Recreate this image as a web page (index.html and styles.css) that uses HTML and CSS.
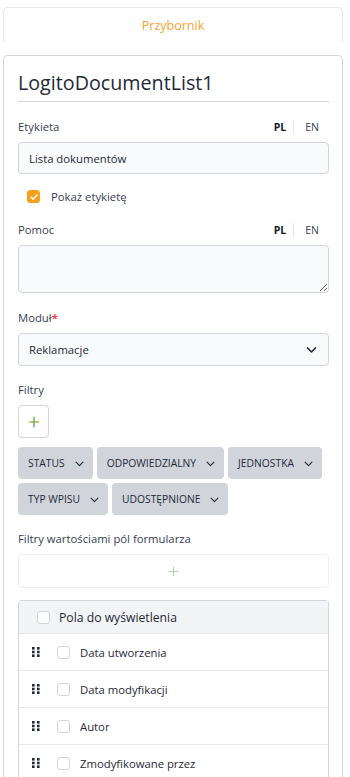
FILE: index.html
```html
<!DOCTYPE html>
<html lang="pl">
<head>
    <meta charset="UTF-8">
    <meta name="viewport" content="width=device-width, initial-scale=1.0">
    <title>Przybornik</title>
    <link rel="stylesheet" href="styles.css">
</head>
<body>

    <!-- Zakladka -->
    <div class="tab-bar">
        <span class="tab-active">Przybornik</span>
    </div>

    <!-- Panel wlasciwosci -->
    <div class="panel">
        <h2 class="panel-title">LogitoDocumentList1</h2>

        <div class="field-head">
            <label>Etykieta</label>
            <div class="lang-switch">
                <span class="lang lang-active">PL</span>
                <span class="lang">EN</span>
            </div>
        </div>
        <input class="text-input" type="text" value="Lista dokumentów">

        <label class="check-row">
            <span class="check check-on">
                <svg viewBox="0 0 12 12" width="10" height="10"><path d="M2.5 6.2 L5 8.5 L9.5 3.8" fill="none" stroke="#fff" stroke-width="1.8" stroke-linecap="round" stroke-linejoin="round"/></svg>
            </span>
            Pokaż etykietę
        </label>

        <div class="field-head">
            <label>Pomoc</label>
            <div class="lang-switch">
                <span class="lang lang-active">PL</span>
                <span class="lang">EN</span>
            </div>
        </div>
        <textarea class="text-area"></textarea>

        <div class="field-head">
            <label>Moduł<span class="required">*</span></label>
        </div>
        <div class="select">
            <span>Reklamacje</span>
            <svg viewBox="0 0 16 16" width="13" height="13"><path d="M3 6 L8 11 L13 6" fill="none" stroke="#1f2937" stroke-width="1.8" stroke-linecap="round" stroke-linejoin="round"/></svg>
        </div>

        <div class="field-head">
            <label>Filtry</label>
        </div>
        <button class="btn-add">
            <svg viewBox="0 0 14 14" width="12" height="12"><path d="M1 7 H13" stroke="#b9a83e" stroke-width="1.6"/><path d="M7 1 V13" stroke="#4fae57" stroke-width="1.6"/></svg>
        </button>

        <div class="chips">
            <span class="chip">STATUS <svg viewBox="0 0 16 16" width="11" height="11"><path d="M3 6 L8 11 L13 6" fill="none" stroke="#1f2937" stroke-width="1.6" stroke-linecap="round" stroke-linejoin="round"/></svg></span>
            <span class="chip">ODPOWIEDZIALNY <svg viewBox="0 0 16 16" width="11" height="11"><path d="M3 6 L8 11 L13 6" fill="none" stroke="#1f2937" stroke-width="1.6" stroke-linecap="round" stroke-linejoin="round"/></svg></span>
            <span class="chip">JEDNOSTKA <svg viewBox="0 0 16 16" width="11" height="11"><path d="M3 6 L8 11 L13 6" fill="none" stroke="#1f2937" stroke-width="1.6" stroke-linecap="round" stroke-linejoin="round"/></svg></span>
            <span class="chip">TYP WPISU <svg viewBox="0 0 16 16" width="11" height="11"><path d="M3 6 L8 11 L13 6" fill="none" stroke="#1f2937" stroke-width="1.6" stroke-linecap="round" stroke-linejoin="round"/></svg></span>
            <span class="chip">UDOSTĘPNIONE <svg viewBox="0 0 16 16" width="11" height="11"><path d="M3 6 L8 11 L13 6" fill="none" stroke="#1f2937" stroke-width="1.6" stroke-linecap="round" stroke-linejoin="round"/></svg></span>
        </div>

        <div class="field-head">
            <label>Filtry wartościami pól formularza</label>
        </div>
        <div class="add-box">
            <svg viewBox="0 0 14 14" width="11" height="11"><path d="M7 1 V13 M1 7 H13" stroke="#a6dba9" stroke-width="1.3"/></svg>
        </div>

        <!-- Lista pol -->
        <div class="field-list">
            <div class="list-head">
                <span class="check"></span>
                Pola do wyświetlenia
            </div>
            <div class="list-row">
                <svg class="grip" viewBox="0 0 8 10" width="8" height="10"><rect x="0" y="0" width="2.6" height="2.6"/><rect x="5" y="0" width="2.6" height="2.6"/><rect x="0" y="3.7" width="2.6" height="2.6"/><rect x="5" y="3.7" width="2.6" height="2.6"/><rect x="0" y="7.4" width="2.6" height="2.6"/><rect x="5" y="7.4" width="2.6" height="2.6"/></svg>
                <span class="check"></span>
                Data utworzenia
            </div>
            <div class="list-row">
                <svg class="grip" viewBox="0 0 8 10" width="8" height="10"><rect x="0" y="0" width="2.6" height="2.6"/><rect x="5" y="0" width="2.6" height="2.6"/><rect x="0" y="3.7" width="2.6" height="2.6"/><rect x="5" y="3.7" width="2.6" height="2.6"/><rect x="0" y="7.4" width="2.6" height="2.6"/><rect x="5" y="7.4" width="2.6" height="2.6"/></svg>
                <span class="check"></span>
                Data modyfikacji
            </div>
            <div class="list-row">
                <svg class="grip" viewBox="0 0 8 10" width="8" height="10"><rect x="0" y="0" width="2.6" height="2.6"/><rect x="5" y="0" width="2.6" height="2.6"/><rect x="0" y="3.7" width="2.6" height="2.6"/><rect x="5" y="3.7" width="2.6" height="2.6"/><rect x="0" y="7.4" width="2.6" height="2.6"/><rect x="5" y="7.4" width="2.6" height="2.6"/></svg>
                <span class="check"></span>
                Autor
            </div>
            <div class="list-row">
                <svg class="grip" viewBox="0 0 8 10" width="8" height="10"><rect x="0" y="0" width="2.6" height="2.6"/><rect x="5" y="0" width="2.6" height="2.6"/><rect x="0" y="3.7" width="2.6" height="2.6"/><rect x="5" y="3.7" width="2.6" height="2.6"/><rect x="0" y="7.4" width="2.6" height="2.6"/><rect x="5" y="7.4" width="2.6" height="2.6"/></svg>
                <span class="check"></span>
                Zmodyfikowane przez
            </div>
        </div>
    </div>

</body>
</html>
```

FILE: styles.css
```css
body {
    font-family: "Open Sans", "Noto Sans", sans-serif;
    margin: 0;
    padding: 0;
    background-color: #fff;
    color: #374151;
    font-size: 11.3px;
}

.tab-bar {
    margin: 7px 7px 0 3px;
    height: 34px;
    border: 1px solid #e5e7eb;
    border-bottom: none;
    border-radius: 5px 5px 0 0;
    display: flex;
    align-items: center;
    justify-content: center;
}

.tab-active {
    color: #f7a234;
    font-size: 12.5px;
}

.panel {
    margin: 13px 7px 0 3px;
    border: 1px solid #d1d5db;
    border-bottom: none;
    border-radius: 5px 5px 0 0;
    padding: 13px 13px 0 14px;
}

.panel-title {
    margin: 0 0 16px;
    padding-bottom: 5px;
    font-size: 19.7px;
    line-height: 27px;
    font-weight: 400;
    color: #1f2937;
    border-bottom: 1px solid #d1d5db;
}

.field-head {
    display: flex;
    justify-content: space-between;
    align-items: center;
    margin-bottom: 7px;
    height: 17px;
}

.required {
    color: #ef4444;
    font-weight: bold;
}

.lang-switch {
    display: flex;
    margin-right: 10px;
}

.lang {
    font-size: 10.5px;
    padding: 0 0 0 11px;
}

.lang-active {
    font-weight: bold;
    color: #111827;
    padding: 0 7px 0 0;
    border-right: 1px solid #e5e7eb;
}

.text-input, .text-area, .select {
    display: block;
    box-sizing: border-box;
    width: 100%;
    margin: 0;
    background-color: #f9fafb;
    border: 1px solid #d1d5db;
    border-radius: 4px;
    font-family: inherit;
    font-size: 11.3px;
    color: #1f2937;
}

.text-input {
    height: 32px;
    padding: 0 10px;
}

.check-row {
    display: flex;
    align-items: center;
    gap: 11px;
    height: 17px;
    margin: 14px 0 16px 9px;
}

.check {
    display: inline-flex;
    align-items: center;
    justify-content: center;
    box-sizing: border-box;
    width: 13px;
    height: 13px;
    border: 1px solid #d1d5db;
    border-radius: 3px;
    background-color: #fff;
    flex-shrink: 0;
}

.check-on {
    background-color: #f7a01c;
    border-color: #f7a01c;
}

.text-area {
    height: 48px;
    resize: vertical;
    margin-bottom: 16px;
}

.select {
    height: 33px;
    padding: 0 10px;
    display: flex;
    align-items: center;
    justify-content: space-between;
    margin-bottom: 15px;
}

.btn-add {
    display: flex;
    align-items: center;
    justify-content: center;
    width: 31px;
    height: 33px;
    padding: 0;
    background-color: #fff;
    border: 1px solid #d1d5db;
    border-radius: 4px;
    margin-bottom: 9px;
}

.chips {
    display: flex;
    flex-wrap: wrap;
    gap: 4px;
    margin-bottom: 15px;
}

.chip {
    display: inline-flex;
    align-items: center;
    gap: 9px;
    height: 32px;
    padding: 0 8px 0 10px;
    background-color: #d1d5db;
    border-radius: 4px;
    font-size: 10.3px;
    color: #1f2937;
}

.add-box {
    display: flex;
    align-items: center;
    justify-content: center;
    height: 32px;
    border: 1px solid #eceef1;
    border-radius: 4px;
    margin-bottom: 12px;
}

.field-list {
    border: 1px solid #d1d5db;
    border-bottom: none;
    border-radius: 4px 4px 0 0;
}

.list-head {
    display: flex;
    align-items: center;
    gap: 9px;
    height: 32px;
    padding-left: 18px;
    background-color: #f3f4f6;
    font-size: 12.2px;
    font-weight: 500;
    color: #1f2937;
}

.list-row {
    display: flex;
    align-items: center;
    height: 36px;
    border-top: 1px solid #e5e7eb;
    padding-left: 13px;
    color: #1f2937;
}

.list-row .check {
    margin-right: 10px;
}

.grip {
    fill: #1f2937;
    margin-right: 17px;
}
```
